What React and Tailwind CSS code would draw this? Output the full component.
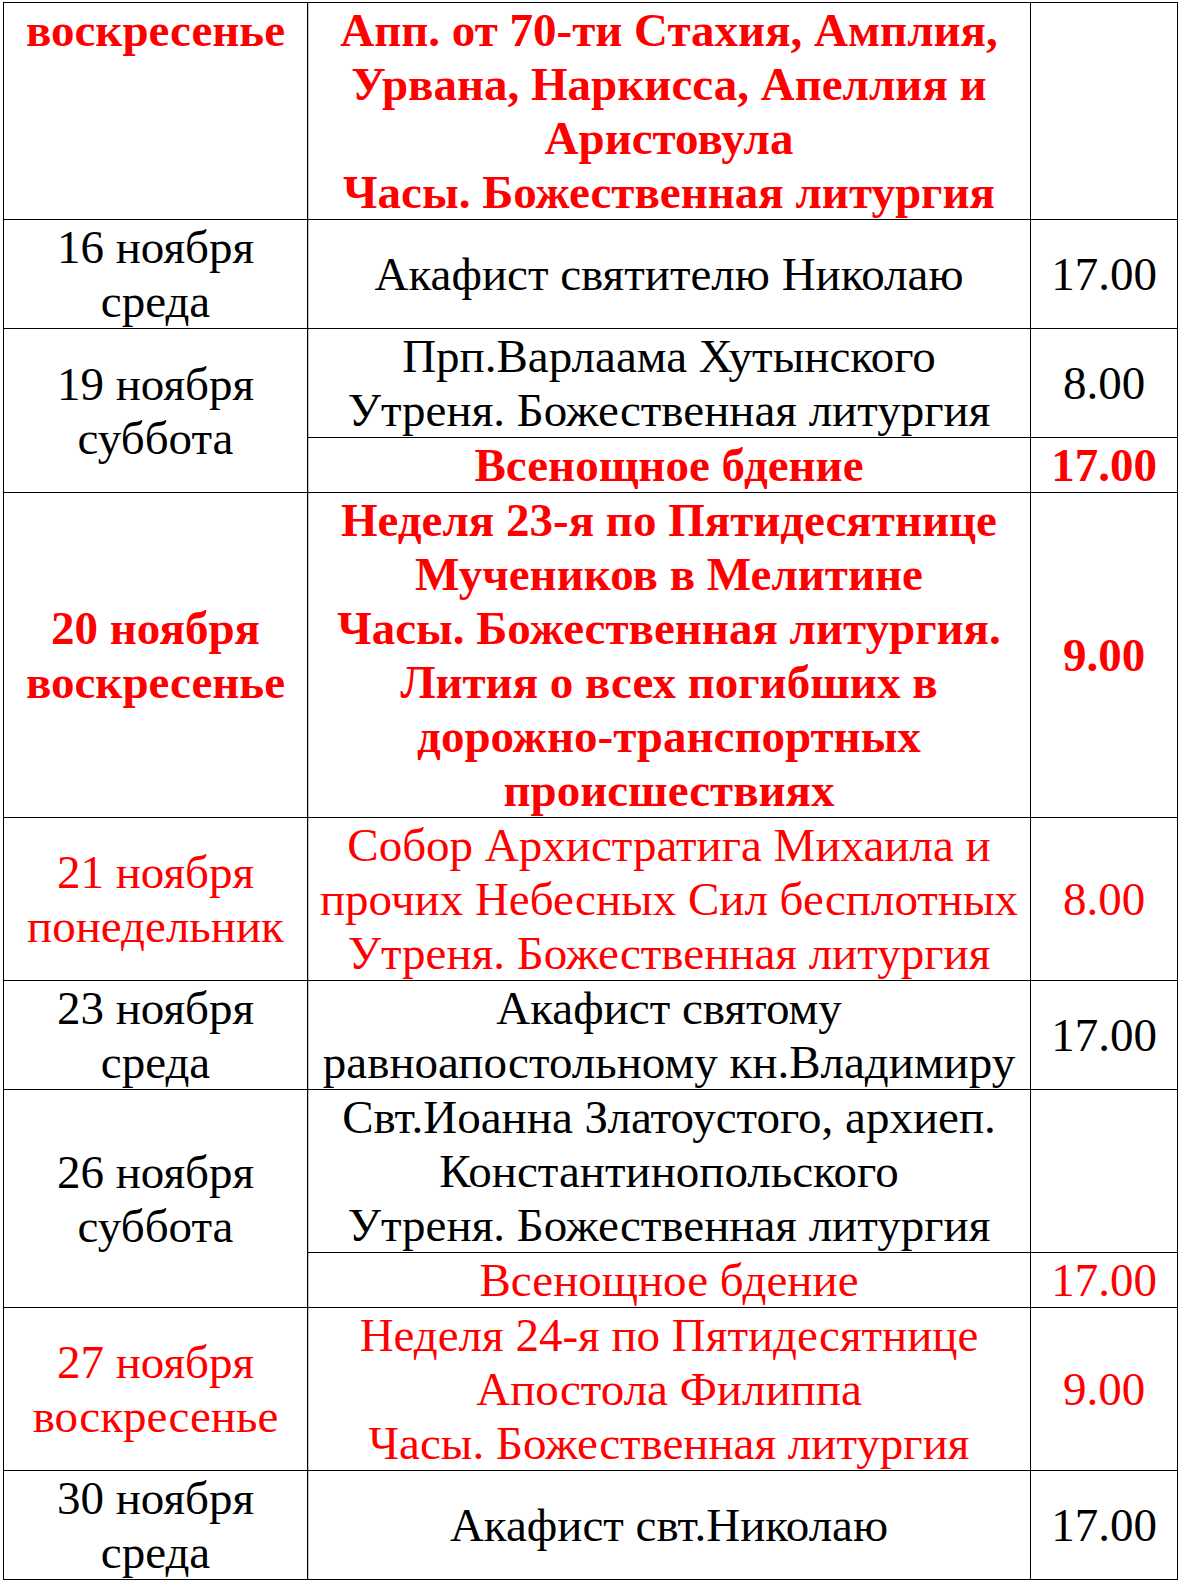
import React from 'react';

const RED_B = 'text-[#ff0000] font-bold';
const RED = 'text-[#ff0000]';
const BLACK = 'text-black';

// schedule rows: date cell + one or more service sub-rows
const schedule = [
  {
    date: ['воскресенье'], dateStyle: RED_B, top: true,
    subs: [{ lines: ['Апп. от 70-ти Стахия, Амплия,', 'Урвана, Наркисса, Апеллия и', 'Аристовула', 'Часы. Божественная литургия'], time: '', style: RED_B }],
  },
  {
    date: ['16 ноября', 'среда'], dateStyle: BLACK,
    subs: [{ lines: ['Акафист святителю Николаю'], time: '17.00', style: BLACK }],
  },
  {
    date: ['19 ноября', 'суббота'], dateStyle: BLACK,
    subs: [
      { lines: ['Прп.Варлаама Хутынского', 'Утреня. Божественная литургия'], time: '8.00', style: BLACK },
      { lines: ['Всенощное бдение'], time: '17.00', style: RED_B },
    ],
  },
  {
    date: ['20 ноября', 'воскресенье'], dateStyle: RED_B,
    subs: [{ lines: ['Неделя 23-я по Пятидесятнице', 'Мучеников в Мелитине', 'Часы. Божественная литургия.', 'Лития о всех погибших в', 'дорожно-транспортных', 'происшествиях'], time: '9.00', style: RED_B }],
  },
  {
    date: ['21 ноября', 'понедельник'], dateStyle: RED,
    subs: [{ lines: ['Собор Архистратига Михаила и', 'прочих Небесных Сил бесплотных', 'Утреня. Божественная литургия'], time: '8.00', style: RED }],
  },
  {
    date: ['23 ноября', 'среда'], dateStyle: BLACK,
    subs: [{ lines: ['Акафист святому', 'равноапостольному кн.Владимиру'], time: '17.00', style: BLACK }],
  },
  {
    date: ['26 ноября', 'суббота'], dateStyle: BLACK,
    subs: [
      { lines: ['Свт.Иоанна Златоустого, архиеп.', 'Константинопольского', 'Утреня. Божественная литургия'], time: '', style: BLACK },
      { lines: ['Всенощное бдение'], time: '17.00', style: RED },
    ],
  },
  {
    date: ['27 ноября', 'воскресенье'], dateStyle: RED,
    subs: [{ lines: ['Неделя 24-я по Пятидесятнице', 'Апостола Филиппа', 'Часы. Божественная литургия'], time: '9.00', style: RED }],
  },
  {
    date: ['30 ноября', 'среда'], dateStyle: BLACK,
    subs: [{ lines: ['Акафист свт.Николаю'], time: '17.00', style: BLACK }],
  },
];

const Lines = ({ lines }) => lines.map((l, i) => (
  <div key={i} className="whitespace-nowrap">{l}</div>
));

const App = () => {
  return (
    <div className="min-h-[1586px] bg-white pt-[2px] pl-[3px] font-['Liberation_Serif','Times_New_Roman',serif] text-[47px] leading-[54px]">
      <table className="table-fixed border-collapse w-[1174px]">
        <colgroup>
          <col className="w-[304px]" />
          <col className="w-[723px]" />
          <col className="w-[147px]" />
        </colgroup>
        <tbody>
          {schedule.map((row, ri) => row.subs.map((sub, si) => (
            <tr key={`${ri}-${si}`}>
              {si === 0 && (
                <td
                  rowSpan={row.subs.length}
                  className={`border border-black p-0 px-[6px] text-center ${row.top ? 'align-top' : 'align-middle'} ${row.dateStyle}`}
                >
                  <Lines lines={row.date} />
                </td>
              )}
              <td className={`border border-black p-0 px-[6px] text-center align-middle shadow-[inset_1px_0_0_#c4c4c4] ${sub.style}`}>
                <Lines lines={sub.lines} />
              </td>
              <td className={`border border-black p-0 px-[6px] text-center align-middle ${sub.style}`}>
                {sub.time}
              </td>
            </tr>
          )))}
        </tbody>
      </table>
    </div>
  );
};

export default App;
